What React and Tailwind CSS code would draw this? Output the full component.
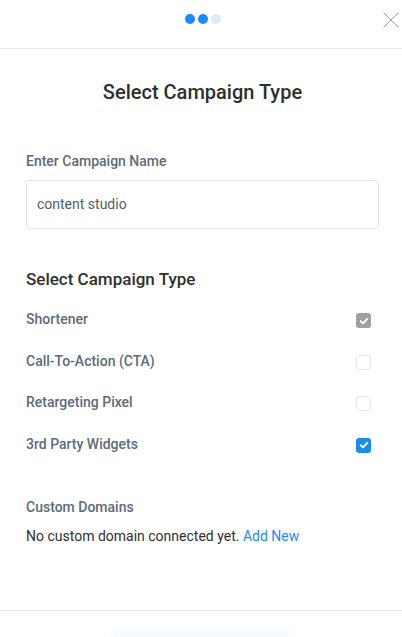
import React from "react";

function Check({ state }) {
  if (state === "gray")
    return (
      <span className="flex h-[15px] w-[15px] items-center justify-center rounded-[3px] bg-[#a0a0a0]">
        <svg width="10" height="10" viewBox="0 0 10 10"><path d="M1.8 5.2 L4 7.3 L8.3 2.8" fill="none" stroke="#fff" strokeWidth="1.9" strokeLinecap="round" strokeLinejoin="round"/></svg>
      </span>
    );
  if (state === "blue")
    return (
      <span className="flex h-[15px] w-[15px] items-center justify-center rounded-[3px] bg-[#1a8bef]">
        <svg width="10" height="10" viewBox="0 0 10 10"><path d="M1.8 5.2 L4 7.3 L8.3 2.8" fill="none" stroke="#fff" strokeWidth="1.9" strokeLinecap="round" strokeLinejoin="round"/></svg>
      </span>
    );
  return <span className="block h-[15px] w-[15px] rounded-[3px] border border-[#e2e6ea] bg-white" />;
}

export default function App() {
  const rows = [
    ["Shortener", "gray"],
    ["Call-To-Action (CTA)", "none"],
    ["Retargeting Pixel", "none"],
    ["3rd Party Widgets", "blue"],
  ];
  return (
    <div className="relative h-[637px] w-[402px] overflow-hidden bg-white" style={{ fontFamily: "Roboto, 'Liberation Sans', sans-serif" }}>
      <div className="relative flex h-[49px] items-center justify-center border-b border-[#e6e8eb] pl-[3px]">
        <div className="flex gap-[3px] pb-[11px] pt-0">
          <span className="h-[10px] w-[10px] rounded-full bg-[#1a8bef]" />
          <span className="h-[10px] w-[10px] rounded-full bg-[#1a8bef]" />
          <span className="h-[10px] w-[10px] rounded-full bg-[#e3e9f3]" />
        </div>
        <svg className="absolute right-[3px] top-[12px]" width="16" height="16" viewBox="0 0 16 16">
          <path d="M0.5 0.5 L15.5 15.5 M15.5 0.5 L0.5 15.5" stroke="#9aa0a6" strokeWidth="1" fill="none" />
        </svg>
      </div>
      <div className="pl-[26px] pr-[23px]">
        <h1 className="mt-[29px] text-center text-[20px] font-medium leading-[28px] text-[#2f2f2f]">Select Campaign Type</h1>
        <div className="mt-[45px] text-[14px] font-medium leading-[20px] text-[#5d6b78]">Enter Campaign Name</div>
        <div className="mt-[9px] flex h-[49px] items-center rounded-[4px] border border-[#dfe4ea] px-[10px] text-[14px] text-[#555c63]">content studio</div>
        <h2 className="mt-[38px] text-[17px] font-medium leading-[24px] text-[#2f2f2f]">Select Campaign Type</h2>
        <div className="mt-[8px] flex flex-col">
          {rows.map(([label, st]) => (
            <div key={label} className="flex h-[41.5px] items-center justify-between pr-[8px]">
              <span className="text-[14px] font-medium text-[#5d6b78]">{label}</span>
              <span className="mt-[2px]"><Check state={st} /></span>
            </div>
          ))}
        </div>
        <div className="mt-[32px] text-[14px] font-medium leading-[20px] text-[#5d6b78]">Custom Domains</div>
        <div className="mt-[9px] text-[14px] leading-[20px] text-[#2f2f2f]">
          No custom domain connected yet. <span className="text-[#1a8bef]">Add New</span>
        </div>
      </div>
      <div className="absolute left-0 right-0 top-[610px] h-[27px] border-t border-[#e6e8eb]">
        <div className="mx-auto mt-[20px] h-[10px] w-[180px] rounded-full bg-[#f3f8fe] blur-[4px]" />
      </div>
    </div>
  );
}
